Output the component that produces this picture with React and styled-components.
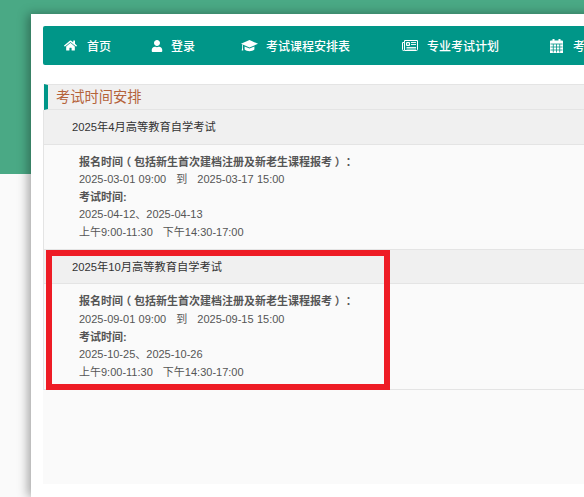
import React from 'react';
import styled, { createGlobalStyle } from 'styled-components';
import { FaHome, FaUser } from 'react-icons/fa';

const GlobalStyle = createGlobalStyle`
  html, body {
    margin: 0;
    height: 100%;
    overflow: hidden;
  }
  body {
    background: linear-gradient(#4aa985 0, #4aa985 174px, #fafafa 174px);
    font-family: "Liberation Sans", "Noto Sans CJK SC", sans-serif;
    font-size: 11px;
    color: #555;
  }
`;

const Page = styled.div`
  width: 584px;
  height: 497px;
  overflow: hidden;
  padding: 14px 0 0 31px;
  box-sizing: border-box;
`;

const Card = styled.div`
  position: relative;
  width: 620px;
  height: 483px;
  padding: 12px 0 0 12px;
  box-sizing: border-box;
  background: #fff;
  box-shadow: -3px 0 10px rgba(0, 0, 0, 0.35);
`;

const Nav = styled.nav`
  display: flex;
  align-items: center;
  height: 39px;
  width: 600px;
  background: #009688;
  border-radius: 2px;
  color: #fff;
  white-space: nowrap;
`;

const NavItem = styled.a`
  display: flex;
  align-items: center;
  gap: ${(p) => p.$gap}px;
  width: ${(p) => p.$width}px;
  padding-left: 21px;
  box-sizing: border-box;
  flex: none;
  font-size: 12px;
  font-weight: 500;
  svg {
    flex: none;
  }
`;

const Section = styled.section`
  margin-top: 19px;
  width: 600px;
  height: 400px;
  background: #fafafa;
`;

const SectionTitle = styled.h3`
  margin: 0 0 0 1px;
  height: 24px;
  line-height: 24px;
  padding-left: 8px;
  background: #f0f0f0;
  border-top: 1px solid #e4e4e4;
  border-bottom: 1px solid #e4e4e4;
  border-left: 4px solid #009688;
  font-size: 14.25px;
  font-weight: normal;
  color: #b5633a;
`;

const Exam = styled.div`
  border-left: 1px solid #e4e4e4;
  border-bottom: 1px solid #e4e4e4;
`;

const ExamTitle = styled.div`
  height: 33.5px;
  line-height: 35px;
  padding-left: 28px;
  background: #f0f0f0;
  border-bottom: 1px solid #e4e4e4;
  font-size: 11.25px;
  color: #333;
`;

const ExamBody = styled.div`
  padding: 9px 0 7.5px 35px;
  line-height: 17.6px;
  word-spacing: 0.3px;
`;

const Line = styled.div`
  font-weight: ${(p) => (p.$bold ? 'bold' : 'normal')};
  white-space: pre;
`;

const Punct = styled.span`
  font-feature-settings: "halt";
  padding: 0 2.75px;
`;

const Highlight = styled.div`
  position: absolute;
  left: 15px;
  top: 236px;
  width: 332px;
  height: 128px;
  border: 6px solid #ee1c25;
`;

const CapIcon = () => (
  <svg width="17" height="12" viewBox="0 0 17 12" fill="#fff">
    <path d="M0 3.8 8.5 0 17 3.8 8.5 7.6z" />
    <path d="M3.6 6.4v3.2c2.2 2.3 7.6 2.3 9.8 0V6.4L8.5 8.6z" />
    <path d="M1.1 4.6h.8v3.6l.4 2.4H.7l.4-2.4z" />
  </svg>
);

const NewspaperIcon = () => (
  <svg width="16" height="11" viewBox="0 0 16 11" fill="none" stroke="#fff" strokeWidth="1">
    <path d="M2.5 10.5h-1a1 1 0 0 1-1-1v-7h2v7.5a.5.5 0 0 0 .5.5h11.5a1 1 0 0 0 1-1V.5h-13v2" />
    <path d="M4.5 2.5h3v3h-3z" fill="#fff" fillOpacity="0.35" />
    <path d="M9 2.5h5M9 4.5h5M4.5 7.5h9.5M4.5 9h9.5" strokeWidth="0.9" />
  </svg>
);

const CalendarIcon = () => (
  <svg width="13" height="14" viewBox="0 0 13 14">
    <path fill="#fff" d="M0 2.4a.9.9 0 0 1 .9-.9h1.6V0h2v1.5h4V0h2v1.5h1.6a.9.9 0 0 1 .9.9V14H0z" />
    <path
      fill="none"
      stroke="#009688"
      strokeWidth="0.8"
      d="M.5 5h12M.5 8h12M.5 11h12M3.3 5v8.5M6.5 5v8.5M9.7 5v8.5"
    />
  </svg>
);

const navItems = [
  { icon: <FaHome size={13} />, label: '首页', width: 87, gap: 10 },
  { icon: <FaUser size={12} />, label: '登录', width: 90, gap: 8 },
  { icon: <CapIcon />, label: '考试课程安排表', width: 161, gap: 8 },
  { icon: <NewspaperIcon />, label: '专业考试计划', width: 148, gap: 9 },
  { icon: <CalendarIcon />, label: '考试时间', width: 110, gap: 10 },
];

const exams = [
  {
    title: '2025年4月高等教育自学考试',
    signup: '2025-03-01 09:00   到   2025-03-17 15:00',
    days: '2025-04-12、2025-04-13',
  },
  {
    title: '2025年10月高等教育自学考试',
    signup: '2025-09-01 09:00   到   2025-09-15 15:00',
    days: '2025-10-25、2025-10-26',
  },
];

export default function App() {
  return (
    <Page>
      <GlobalStyle />
      <Card>
        <Nav>
          {navItems.map(({ icon, label, width, gap }) => (
            <NavItem key={label} $width={width} $gap={gap}>
              {icon}
              {label}
            </NavItem>
          ))}
        </Nav>
        <Section>
          <SectionTitle>考试时间安排</SectionTitle>
          {exams.map((exam) => (
            <Exam key={exam.title}>
              <ExamTitle>{exam.title}</ExamTitle>
              <ExamBody>
                <Line $bold>
                  报名时间<Punct>（</Punct>包括新生首次建档注册及新老生课程报考<Punct>）</Punct><Punct>：</Punct>
                </Line>
                <Line>{exam.signup}</Line>
                <Line $bold>考试时间:</Line>
                <Line>{exam.days}</Line>
                <Line>上午9:00-11:30   下午14:30-17:00</Line>
              </ExamBody>
            </Exam>
          ))}
        </Section>
        <Highlight />
      </Card>
    </Page>
  );
}
